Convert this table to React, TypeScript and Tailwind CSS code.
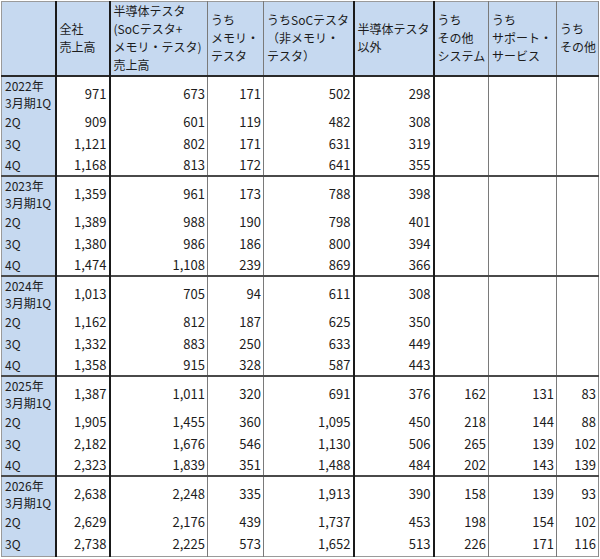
import React from 'react';

type Group = {
  year: string;
  rows: string[][];
};

const headers: string[][] = [
  [],
  ['全社', '売上高'],
  ['半導体テスタ', '(SoCテスタ+', 'メモリ・テスタ)', '売上高'],
  ['うち', 'メモリ・', 'テスタ'],
  ['うちSoCテスタ', '（非メモリ・', 'テスタ）'],
  ['半導体テスタ', '以外'],
  ['うち', 'その他', 'システム'],
  ['うち', 'サポート・', 'サービス'],
  ['うち', 'その他'],
];

const groups: Group[] = [
  {
    year: '2022年',
    rows: [
      ['971', '673', '171', '502', '298', '', '', ''],
      ['909', '601', '119', '482', '308', '', '', ''],
      ['1,121', '802', '171', '631', '319', '', '', ''],
      ['1,168', '813', '172', '641', '355', '', '', ''],
    ],
  },
  {
    year: '2023年',
    rows: [
      ['1,359', '961', '173', '788', '398', '', '', ''],
      ['1,389', '988', '190', '798', '401', '', '', ''],
      ['1,380', '986', '186', '800', '394', '', '', ''],
      ['1,474', '1,108', '239', '869', '366', '', '', ''],
    ],
  },
  {
    year: '2024年',
    rows: [
      ['1,013', '705', '94', '611', '308', '', '', ''],
      ['1,162', '812', '187', '625', '350', '', '', ''],
      ['1,332', '883', '250', '633', '449', '', '', ''],
      ['1,358', '915', '328', '587', '443', '', '', ''],
    ],
  },
  {
    year: '2025年',
    rows: [
      ['1,387', '1,011', '320', '691', '376', '162', '131', '83'],
      ['1,905', '1,455', '360', '1,095', '450', '218', '144', '88'],
      ['2,182', '1,676', '546', '1,130', '506', '265', '139', '102'],
      ['2,323', '1,839', '351', '1,488', '484', '202', '143', '139'],
    ],
  },
  {
    year: '2026年',
    rows: [
      ['2,638', '2,248', '335', '1,913', '390', '158', '139', '93'],
      ['2,629', '2,176', '439', '1,737', '453', '198', '154', '102'],
      ['2,738', '2,225', '573', '1,652', '513', '226', '171', '116'],
    ],
  },
];

const colWidths = [
  'w-[54px]',
  'w-[54px]',
  'w-[98px]',
  'w-[56px]',
  'w-[90px]',
  'w-[80px]',
  'w-[55px]',
  'w-[68px]',
  'w-[42px]',
];

// heavy lines after 1st, 2nd, 5th and 6th columns
const rightBorder = [
  'border-r-2 border-r-[#1a1a1a]',
  'border-r-2 border-r-[#1a1a1a]',
  'border-r border-r-[#7a7a7a]',
  'border-r border-r-[#7a7a7a]',
  'border-r-2 border-r-[#1a1a1a]',
  'border-r-2 border-r-[#1a1a1a]',
  'border-r border-r-[#7a7a7a]',
  'border-r border-r-[#7a7a7a]',
  'border-r border-r-[#8a8a8a]',
];

const quarters = ['1Q', '2Q', '3Q', '4Q'];

function rowHeight(r: number, last: boolean) {
  if (r === 0) return 'h-[35px] border-t-2 border-t-[#4a4a4a]';
  if (last) return 'h-[24px]';
  if (r === 3) return 'h-[21px]';
  return 'h-[22px]';
}

export default function App() {
  return (
    <div className="w-[600px] h-[559px] bg-white pt-px pl-px overflow-hidden">
      <table
        className="table-fixed border-collapse w-[597px] text-[12px] leading-[18px] text-[#1c1c1c] border border-[#9a9a9a]"
        style={{ fontFamily: '"Noto Sans CJK JP", "Noto Sans", sans-serif' }}
      >
        <colgroup>
          {colWidths.map((w, i) => (
            <col key={i} className={w} />
          ))}
        </colgroup>
        <thead>
          <tr className="h-[74px] bg-[#c6d9f0] border-b-2 border-b-[#2a2a2a]">
            {headers.map((lines, i) => (
              <th
                key={i}
                className={`${rightBorder[i]} font-normal text-left align-middle pl-[3px] pr-0 py-0 whitespace-nowrap`}
              >
                {lines.map((l, j) => (
                  <div key={j}>{l}</div>
                ))}
              </th>
            ))}
          </tr>
        </thead>
        <tbody>
          {groups.map((g, gi) =>
            g.rows.map((row, r) => (
              <tr
                key={g.year + r}
                className={rowHeight(r, gi === groups.length - 1 && r === g.rows.length - 1)}
              >
                <td className={`${rightBorder[0]} bg-[#c6d9f0] pl-[3px] pr-0 py-0 align-middle whitespace-nowrap`}>
                  {r === 0 ? (
                    <div className="leading-[17px]">
                      <div>{g.year}</div>
                      <div>3月期1Q</div>
                    </div>
                  ) : (
                    quarters[r]
                  )}
                </td>
                {row.map((v, c) => (
                  <td
                    key={c}
                    className={`${rightBorder[c + 1]} text-right text-[13px] pr-[2px] pl-0 py-0 align-middle whitespace-nowrap`}
                  >
                    {v}
                  </td>
                ))}
              </tr>
            ))
          )}
        </tbody>
      </table>
    </div>
  );
}
